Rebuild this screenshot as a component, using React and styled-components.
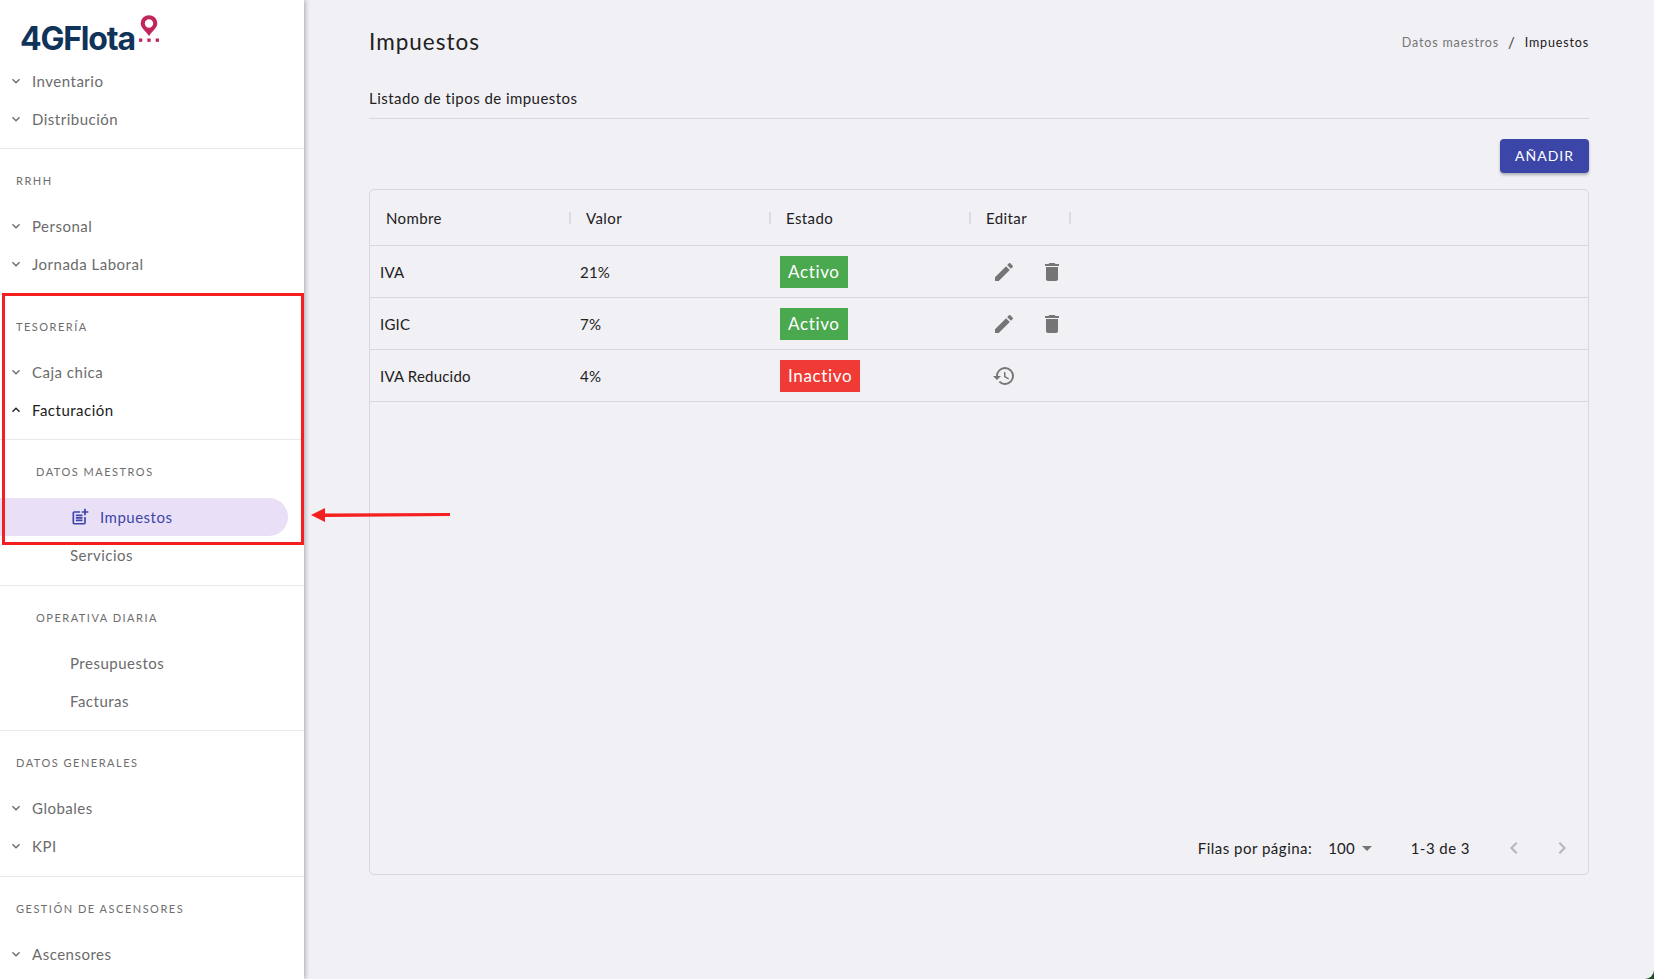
import React from 'react'
import styled, { createGlobalStyle } from 'styled-components'
import { MdEdit, MdDelete, MdHistory, MdPostAdd, MdExpandMore, MdExpandLess, MdChevronLeft, MdChevronRight, MdArrowDropDown } from 'react-icons/md'

const GlobalStyle = createGlobalStyle`
  html, body {
    margin: 0;
    padding: 0;
    background: #1d4d2b;
    font-family: 'Lato', 'Liberation Sans', sans-serif;
  }
  * { box-sizing: border-box; }
`

const Page = styled.div`
  position: relative;
  display: flex;
  width: 1654px;
  height: 979px;
  overflow: hidden;
`

const Sidebar = styled.aside`
  width: 304px;
  height: 979px;
  flex-shrink: 0;
  background: #fff;
  box-shadow: 1px 0 5px rgba(0, 0, 0, 0.32);
  z-index: 1;
  overflow: hidden;
`

const LogoRow = styled.div`
  display: flex;
  align-items: flex-start;
  height: 62px;
  padding: 15px 0 0 20px;
`

const LogoText = styled.span`
  font-family: 'Inter', sans-serif;
  font-size: 32px;
  line-height: 32px;
  margin-top: 8px;
  font-weight: 700;
  letter-spacing: -1.2px;
  color: #10335a;
`

const LogoPin = styled.svg`
  margin-left: 4px;
`

const NavGroup = styled.div`
  padding: ${(p) => (p.$first ? '0 0 10px' : '13px 0 10.6px')};
  border-bottom: ${(p) => (p.$last ? 'none' : '1px solid #e9e9e9')};
`

const GroupLabel = styled.div`
  height: 38px;
  padding: 5px 0 0 ${(p) => (p.$sub ? '36px' : '16px')};
  margin-bottom: 7px;
  font-size: 11px;
  line-height: 28px;
  letter-spacing: 1.5px;
  color: #6e6e6e;
  text-transform: uppercase;
`

const NavRow = styled.div`
  display: flex;
  align-items: center;
  height: 38px;
  width: ${(p) => (p.$active ? '288px' : 'auto')};
  padding-left: ${(p) => (p.$sub ? '70px' : '8px')};
  font-size: 15px;
  letter-spacing: 0.5px;
  color: ${(p) => (p.$open ? '#212121' : p.$active ? '#3d45a8' : '#6b6b6b')};
  background: ${(p) => (p.$active ? '#e9e0f8' : 'transparent')};
  border-radius: ${(p) => (p.$active ? '0 19px 19px 0' : '0')};
`

const NavChevron = styled.span`
  display: flex;
  justify-content: center;
  width: 16px;
  margin-right: 8px;
  color: ${(p) => (p.$open ? '#212121' : '#6b6b6b')};
`

const ActiveIcon = styled(MdPostAdd)`
  margin-right: 10px;
`

const Main = styled.main`
  flex: 1;
  height: 979px;
  padding: 0 65px 0 65px;
  background: #f1f0f5;
  border-radius: 0 0 9px 0;
`

const TitleRow = styled.div`
  display: flex;
  justify-content: space-between;
  align-items: center;
  height: 84px;
`

const Title = styled.h1`
  margin: 0 0 1px;
  font-size: 22.5px;
  font-weight: 400;
  letter-spacing: 1px;
  color: #212121;
`

const Breadcrumb = styled.div`
  display: flex;
  align-items: center;
  gap: 9px;
  font-size: 12.5px;
  letter-spacing: 0.85px;
  color: #757575;
`

const Slash = styled.span`
  font-size: 15px;
  color: #424242;
`

const CrumbCurrent = styled.span`
  color: #212121;
`

const SubTitle = styled.div`
  height: 35px;
  border-bottom: 1px solid #d8d7dc;
  font-size: 15px;
  line-height: 28px;
  letter-spacing: 0.45px;
  color: #212121;
`

const Actions = styled.div`
  display: flex;
  justify-content: flex-end;
  padding: 20px 0 16px;
`

const AddButton = styled.button`
  width: 89px;
  height: 34px;
  padding: 0 0 1px;
  border: none;
  border-radius: 4px;
  background: #3c46a8;
  box-shadow: 0 2px 3px rgba(0, 0, 0, 0.28);
  color: #fff;
  font-family: inherit;
  font-size: 14px;
  letter-spacing: 1px;
`

const Card = styled.section`
  display: flex;
  flex-direction: column;
  width: 1220px;
  height: 686px;
  border: 1px solid #d8d7dc;
  border-radius: 5px;
`

const TableGrid = styled.div`
  display: grid;
  grid-template-columns: 200px 200px 200px 100px 1fr;
  align-items: center;
  height: ${(p) => (p.$head ? '56px' : '52px')};
  border-bottom: 1px solid #d8d7dc;
`

const HeadCell = styled.div`
  position: relative;
  padding-left: 16px;
  font-size: 15px;
  letter-spacing: 0.4px;
  color: #212121;

  &::after {
    content: '';
    position: absolute;
    right: -1px;
    top: 3px;
    bottom: 3px;
    width: 2px;
    background: ${(p) => (p.$plain ? 'transparent' : '#dcdbe0')};
  }
`

const Cell = styled.div`
  display: flex;
  align-items: center;
  padding-left: 10px;
  font-size: 15px;
  letter-spacing: 0.2px;
  color: #212121;
`

const StatusChip = styled.span`
  display: inline-flex;
  align-items: center;
  height: 32px;
  padding: 0 8px;
  background: ${(p) => (p.$on ? '#4aa84f' : '#ef3a36')};
  color: #fff;
  font-size: 17px;
  letter-spacing: 0.65px;
`

const IconGroup = styled.div`
  display: flex;
  gap: 24px;
  padding-left: 12px;
  color: #757575;
`

const Filler = styled.div`
  flex: 1;
`

const Pagination = styled.div`
  display: flex;
  align-items: center;
  justify-content: flex-end;
  height: 52px;
  padding-right: 14px;
  font-size: 15px;
  letter-spacing: 0.5px;
  color: #212121;
`

const RowsValue = styled.span`
  display: flex;
  align-items: center;
  margin: 0 32px 0 16px;
  letter-spacing: 0.1px;
`

const RangeText = styled.span`
  letter-spacing: 0.45px;
`

const PageArrows = styled.span`
  display: flex;
  gap: 24px;
  margin-left: 32px;
  color: #b5b5b8;
`

const Annotation = styled.div`
  position: absolute;
  left: 2px;
  top: 293px;
  width: 302px;
  height: 252px;
  border: 3px solid #f51f1f;
  z-index: 2;
  pointer-events: none;
`

const ArrowMark = styled.svg`
  position: absolute;
  left: 308px;
  top: 506px;
  z-index: 2;
`

const nav = [
  { items: ['Inventario', 'Distribución'], first: true },
  { label: 'RRHH', items: ['Personal', 'Jornada Laboral'] },
  { label: 'Tesorería', items: ['Caja chica', 'Facturación'], open: 'Facturación' },
]

const rows = [
  { name: 'IVA', value: '21%', on: true },
  { name: 'IGIC', value: '7%', on: true },
  { name: 'IVA Reducido', value: '4%', on: false },
]

function Logo() {
  return (
    <LogoRow>
      <LogoText>4GFlota</LogoText>
      <LogoPin width="20" height="27" viewBox="0 0 24 32">
        <path
          fillRule="evenodd"
          fill="#c2255c"
          d="M12 0a10 10 0 0 1 10 10c0 5-6 9-10 15C8 19 2 15 2 10a10 10 0 0 1 10-10zm0 5a5 5 0 1 0 0 10 5 5 0 0 0 0-10z"
        />
        <rect x="0" y="28" width="4" height="4" fill="#c2255c" />
        <rect x="10" y="28" width="4" height="4" fill="#c2255c" />
        <rect x="20" y="28" width="4" height="4" fill="#c2255c" />
      </LogoPin>
    </LogoRow>
  )
}

function NavItem({ text, open }) {
  return (
    <NavRow $open={open}>
      <NavChevron $open={open}>{open ? <MdExpandLess size={16} /> : <MdExpandMore size={16} />}</NavChevron>
      {text}
    </NavRow>
  )
}

export default function App() {
  return (
    <Page>
      <GlobalStyle />
      <Sidebar>
        <Logo />
        {nav.map((g, i) => (
          <NavGroup key={i} $first={g.first}>
            {g.label && <GroupLabel>{g.label}</GroupLabel>}
            {g.items.map((t) => (
              <NavItem key={t} text={t} open={g.open === t} />
            ))}
          </NavGroup>
        ))}
        <NavGroup>
          <GroupLabel $sub>Datos maestros</GroupLabel>
          <NavRow $active $sub>
            <ActiveIcon size={20} />
            Impuestos
          </NavRow>
          <NavRow $sub>Servicios</NavRow>
        </NavGroup>
        <NavGroup>
          <GroupLabel $sub>Operativa diaria</GroupLabel>
          <NavRow $sub>Presupuestos</NavRow>
          <NavRow $sub>Facturas</NavRow>
        </NavGroup>
        <NavGroup>
          <GroupLabel>Datos generales</GroupLabel>
          <NavItem text="Globales" />
          <NavItem text="KPI" />
        </NavGroup>
        <NavGroup $last>
          <GroupLabel>Gestión de ascensores</GroupLabel>
          <NavItem text="Ascensores" />
        </NavGroup>
      </Sidebar>
      <Main>
        <TitleRow>
          <Title>Impuestos</Title>
          <Breadcrumb>
            Datos maestros <Slash>/</Slash> <CrumbCurrent>Impuestos</CrumbCurrent>
          </Breadcrumb>
        </TitleRow>
        <SubTitle>Listado de tipos de impuestos</SubTitle>
        <Actions>
          <AddButton>AÑADIR</AddButton>
        </Actions>
        <Card>
          <TableGrid $head>
            <HeadCell>Nombre</HeadCell>
            <HeadCell>Valor</HeadCell>
            <HeadCell>Estado</HeadCell>
            <HeadCell>Editar</HeadCell>
            <HeadCell $plain />
          </TableGrid>
          {rows.map((r) => (
            <TableGrid key={r.name}>
              <Cell>{r.name}</Cell>
              <Cell>{r.value}</Cell>
              <Cell>
                <StatusChip $on={r.on}>{r.on ? 'Activo' : 'Inactivo'}</StatusChip>
              </Cell>
              <Cell>
                <IconGroup>
                  {r.on ? (
                    <>
                      <MdEdit size={24} />
                      <MdDelete size={24} />
                    </>
                  ) : (
                    <MdHistory size={24} />
                  )}
                </IconGroup>
              </Cell>
            </TableGrid>
          ))}
          <Filler />
          <Pagination>
            Filas por página:
            <RowsValue>
              100
              <MdArrowDropDown size={24} color="#757575" />
            </RowsValue>
            <RangeText>1-3 de 3</RangeText>
            <PageArrows>
              <MdChevronLeft size={24} />
              <MdChevronRight size={24} />
            </PageArrows>
          </Pagination>
        </Card>
      </Main>
      <Annotation />
      <ArrowMark width="144" height="18" viewBox="0 0 144 18">
        <path d="M3 9 L17 2 L17 7.5 L142 7 L142 10 L17 11 L17 16 Z" fill="#f51f1f" />
      </ArrowMark>
    </Page>
  )
}
